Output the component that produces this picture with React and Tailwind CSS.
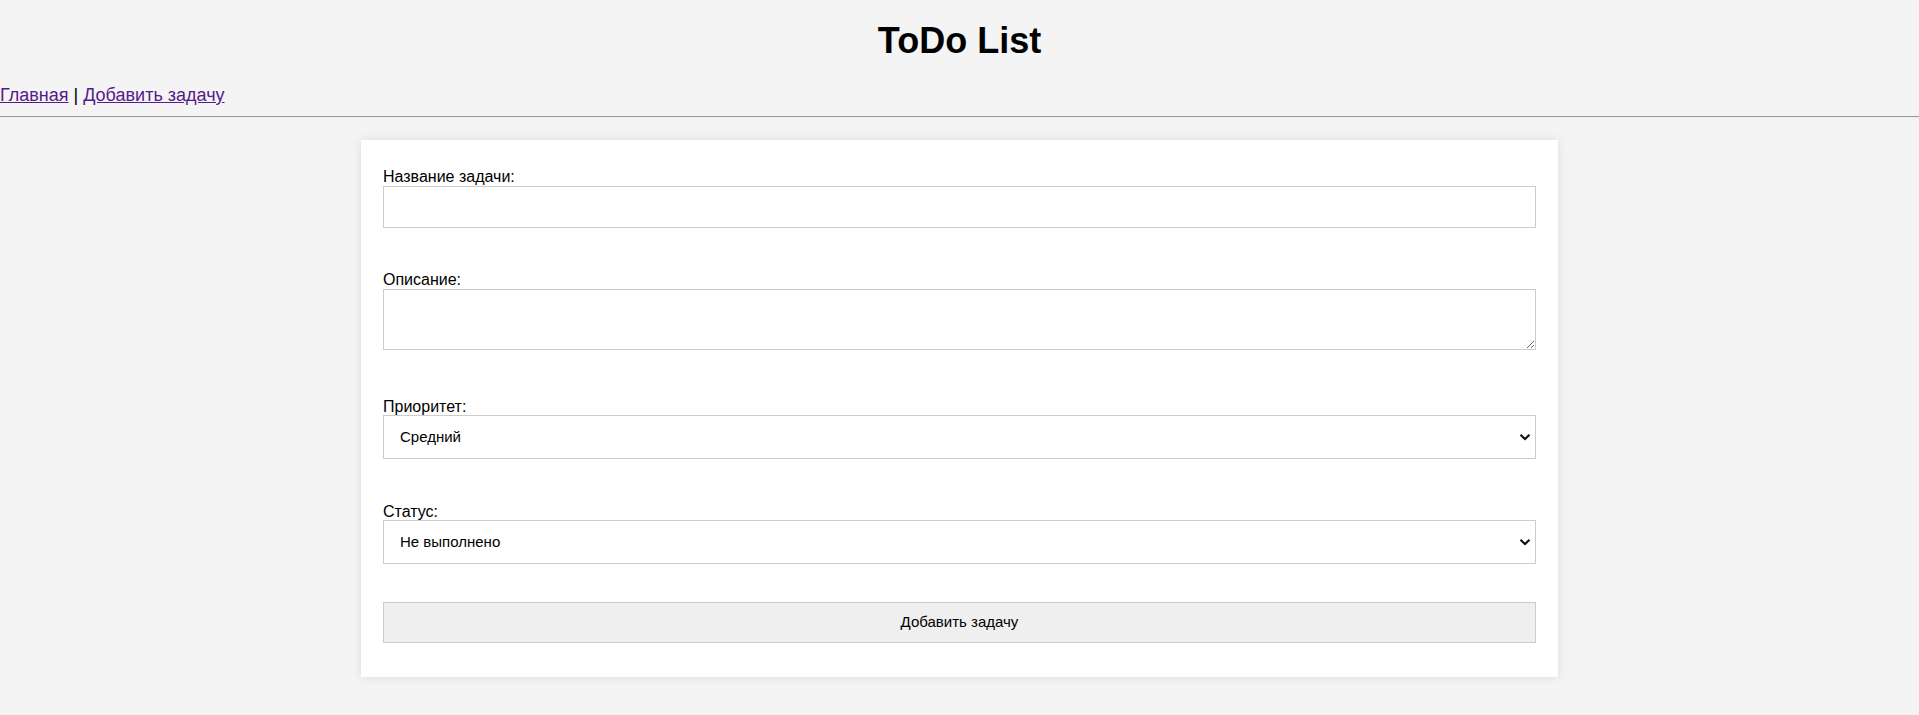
import React from 'react';

const font = { fontFamily: '"Liberation Sans", Arial, sans-serif' };

const Chevron = () => (
  <svg
    className="pointer-events-none absolute right-[5px] top-1/2 -translate-y-1/2"
    width="12"
    height="8"
    viewBox="0 0 12 8"
  >
    <path d="M1.5 1.8 L6 6 L10.5 1.8" fill="none" stroke="#111" strokeWidth="2.2" />
  </svg>
);

const SelectField = ({ value, options }) => (
  <div className="relative mt-[-1px]">
    <select
      defaultValue={value}
      className="block h-[44px] w-full appearance-none border border-[#cccccc] bg-white pl-[16px] pr-8 text-[15px] text-black outline-none"
    >
      {options.map((o) => (
        <option key={o}>{o}</option>
      ))}
    </select>
    <Chevron />
  </div>
);

export default function App() {
  return (
    <div className="min-h-[715px] bg-[#f4f4f4] text-black" style={font}>
      <h1 className="pt-[20px] text-center text-[36px] font-bold leading-[41px]">ToDo List</h1>

      <nav className="mt-[24px] text-[18px] leading-[21px]">
        <a href="#" className="text-[#551a8b] underline">Главная</a>
        {' | '}
        <a href="#" className="text-[#551a8b] underline">Добавить задачу</a>
      </nav>

      <hr className="mt-[10px] h-0 border-t border-b border-t-[#9a9a9a] border-b-[#eeeeee]" />

      <form
        className="mx-auto mt-[22px] w-[1197px] bg-white px-[22px] pt-[28px] pb-[34px] shadow-[0_0_10px_rgba(0,0,0,0.1)]"
        onSubmit={(e) => e.preventDefault()}
      >
        <div>
          <label className="block text-[16px] leading-[18px]">Название задачи:</label>
          <input
            type="text"
            className="block h-[42px] w-full border border-[#cccccc] px-3 text-[15px] outline-none"
          />
        </div>

        <div className="mt-[43px]">
          <label className="block text-[16px] leading-[18px]">Описание:</label>
          <textarea className="block h-[61px] w-full resize-y border border-[#cccccc] px-3 py-2 text-[15px] outline-none" />
        </div>

        <div className="mt-[48px]">
          <label className="block text-[16px] leading-[18px]">Приоритет:</label>
          <SelectField value="Средний" options={['Низкий', 'Средний', 'Высокий']} />
        </div>

        <div className="mt-[44px]">
          <label className="block text-[16px] leading-[18px]">Статус:</label>
          <SelectField value="Не выполнено" options={['Не выполнено', 'Выполнено']} />
        </div>

        <button
          type="submit"
          className="mt-[38px] block h-[41px] w-full border border-[#cccccc] bg-[#efefef] text-[15px] text-black"
        >
          Добавить задачу
        </button>
      </form>
    </div>
  );
}
